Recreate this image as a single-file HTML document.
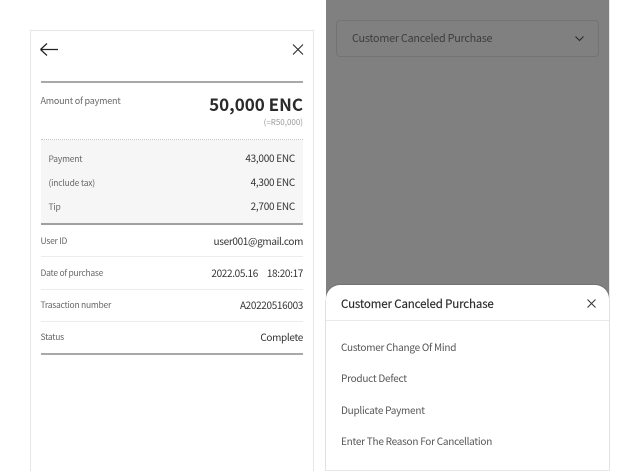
<!DOCTYPE html>
<html><head><meta charset="utf-8"><style>
html,body{margin:0;padding:0;background:#fff;width:640px;height:471px;overflow:hidden}
#w{position:absolute;left:0;top:0;width:640px;height:471px;overflow:hidden;font-family:"Noto Sans CJK KR","Liberation Sans",sans-serif}
.a{position:absolute}
.t{position:absolute;white-space:nowrap;line-height:16px;height:16px}
.r{text-align:right}
.lb{font-size:8.5px;letter-spacing:-.25px;color:#666;left:40.5px}
.v{font-size:10px;letter-spacing:-.34px;color:#333;right:337px}
.li{font-size:10px;letter-spacing:-.25px;color:#555;left:341px}
.p{font-size:8.5px;letter-spacing:-.2px;color:#666;left:48.5px}
.q{font-size:10px;letter-spacing:-.26px;color:#333;right:345px}
</style></head><body><div id="w">
<!-- left panel -->
<div class="a" style="left:30px;top:30px;width:282px;height:445px;border:1px solid #e6e6e6"></div>
<svg class="a" style="left:0;top:0" width="640" height="471" fill="none">
<path d="M40.5 49.5H58M40.5 49.5L47 43.5M40.5 49.5L47 55.5" stroke="#222" stroke-width="1.2"/>
<path d="M293 44.5L303 54.5M303 44.5L293 54.5" stroke="#222" stroke-width="1"/>
</svg>
<div class="a" style="left:40.5px;top:81px;width:262.5px;height:2px;background:#a8a8a8"></div>
<div class="t" style="left:40.5px;top:93px;font-size:9px;letter-spacing:-.2px;color:#666">Amount of payment</div>
<div class="t r" style="right:337px;top:92px;height:24px;line-height:24px;font-size:17px;font-weight:700;color:#2a2a2a">50,000 ENC</div>
<div class="t r" style="right:337px;top:115px;font-size:8px;color:#999">(=R50,000)</div>
<div class="a" style="left:40.5px;top:139px;width:262.5px;height:0;border-top:1px dotted #c4c4c4"></div>
<div class="a" style="left:40.5px;top:140px;width:262.5px;height:83px;background:#f6f6f6"></div>
<div class="a" style="left:40.5px;top:223px;width:262.5px;height:2px;background:#a0a0a0"></div>
<div class="t p" style="top:151px">Payment</div>
<div class="t p" style="top:175px">(include tax)</div>
<div class="t p" style="top:199px">Tip</div>
<div class="t r q" style="top:150px">43,000 ENC</div>
<div class="t r q" style="top:174px">4,300 ENC</div>
<div class="t r q" style="top:198px">2,700 ENC</div>
<div class="t lb" style="top:233px">User ID</div>
<div class="t v" style="top:233px">user001@gmail.com</div>
<div class="a" style="left:40.5px;top:256px;width:262.5px;height:1px;background:#ececec"></div>
<div class="t lb" style="top:265px">Date of purchase</div>
<div class="t v" style="top:265px;word-spacing:7px">2022.05.16 18:20:17</div>
<div class="a" style="left:40.5px;top:289px;width:262.5px;height:1px;background:#ececec"></div>
<div class="t lb" style="top:297px">Trasaction number</div>
<div class="t v" style="top:297px">A20220516003</div>
<div class="a" style="left:40.5px;top:321px;width:262.5px;height:1px;background:#ececec"></div>
<div class="t lb" style="top:329px">Status</div>
<div class="t v" style="top:329px">Complete</div>
<div class="a" style="left:40.5px;top:353px;width:262.5px;height:2px;background:#a8a8a8"></div>
<!-- right panel -->
<div class="a" style="left:326px;top:0;width:283px;height:471px;background:#808080"></div>
<div class="a" style="left:609px;top:0;width:1px;height:471px;background:#e6e6e6"></div>
<div class="a" style="left:336px;top:20px;width:261px;height:35px;border:1px solid #737373;border-radius:4px"></div>
<div class="t" style="left:352px;top:30px;font-size:10.8px;letter-spacing:-.25px;color:#3c3c3c">Customer Canceled Purchase</div>
<svg class="a" style="left:0;top:0" width="640" height="60" fill="none"><path d="M575.5 36.5L579.5 40.5L583.5 36.5" stroke="#2a2a2a" stroke-width="1.1"/></svg>
<div class="a" style="left:326px;top:285px;width:283px;height:186px;background:#fff;border-radius:14px 14px 0 0;box-shadow:0 -1px 1px rgba(0,0,0,.12)"></div>
<div class="a" style="left:325px;top:300px;width:1px;height:171px;background:#e0e0e0"></div>
<div class="a" style="left:326px;top:320px;width:283px;height:1px;background:#e8e8e8"></div>
<div class="a" style="left:325px;top:470px;width:285px;height:1px;background:#e6e6e6"></div>
<div class="t" style="left:341px;top:296px;font-size:11.5px;letter-spacing:-.14px;color:#2a2a2a;-webkit-text-stroke:.15px #2a2a2a">Customer Canceled Purchase</div>
<svg class="a" style="left:0;top:280px" width="640" height="50" fill="none"><path d="M587.5 19.5L595.5 27.5M595.5 19.5L587.5 27.5" stroke="#333" stroke-width="1"/></svg>
<div class="t li" style="top:339px">Customer Change Of Mind</div>
<div class="t li" style="top:370px">Product Defect</div>
<div class="t li" style="top:402px">Duplicate Payment</div>
<div class="t li" style="top:433px">Enter The Reason For Cancellation</div>
</div></body></html>
